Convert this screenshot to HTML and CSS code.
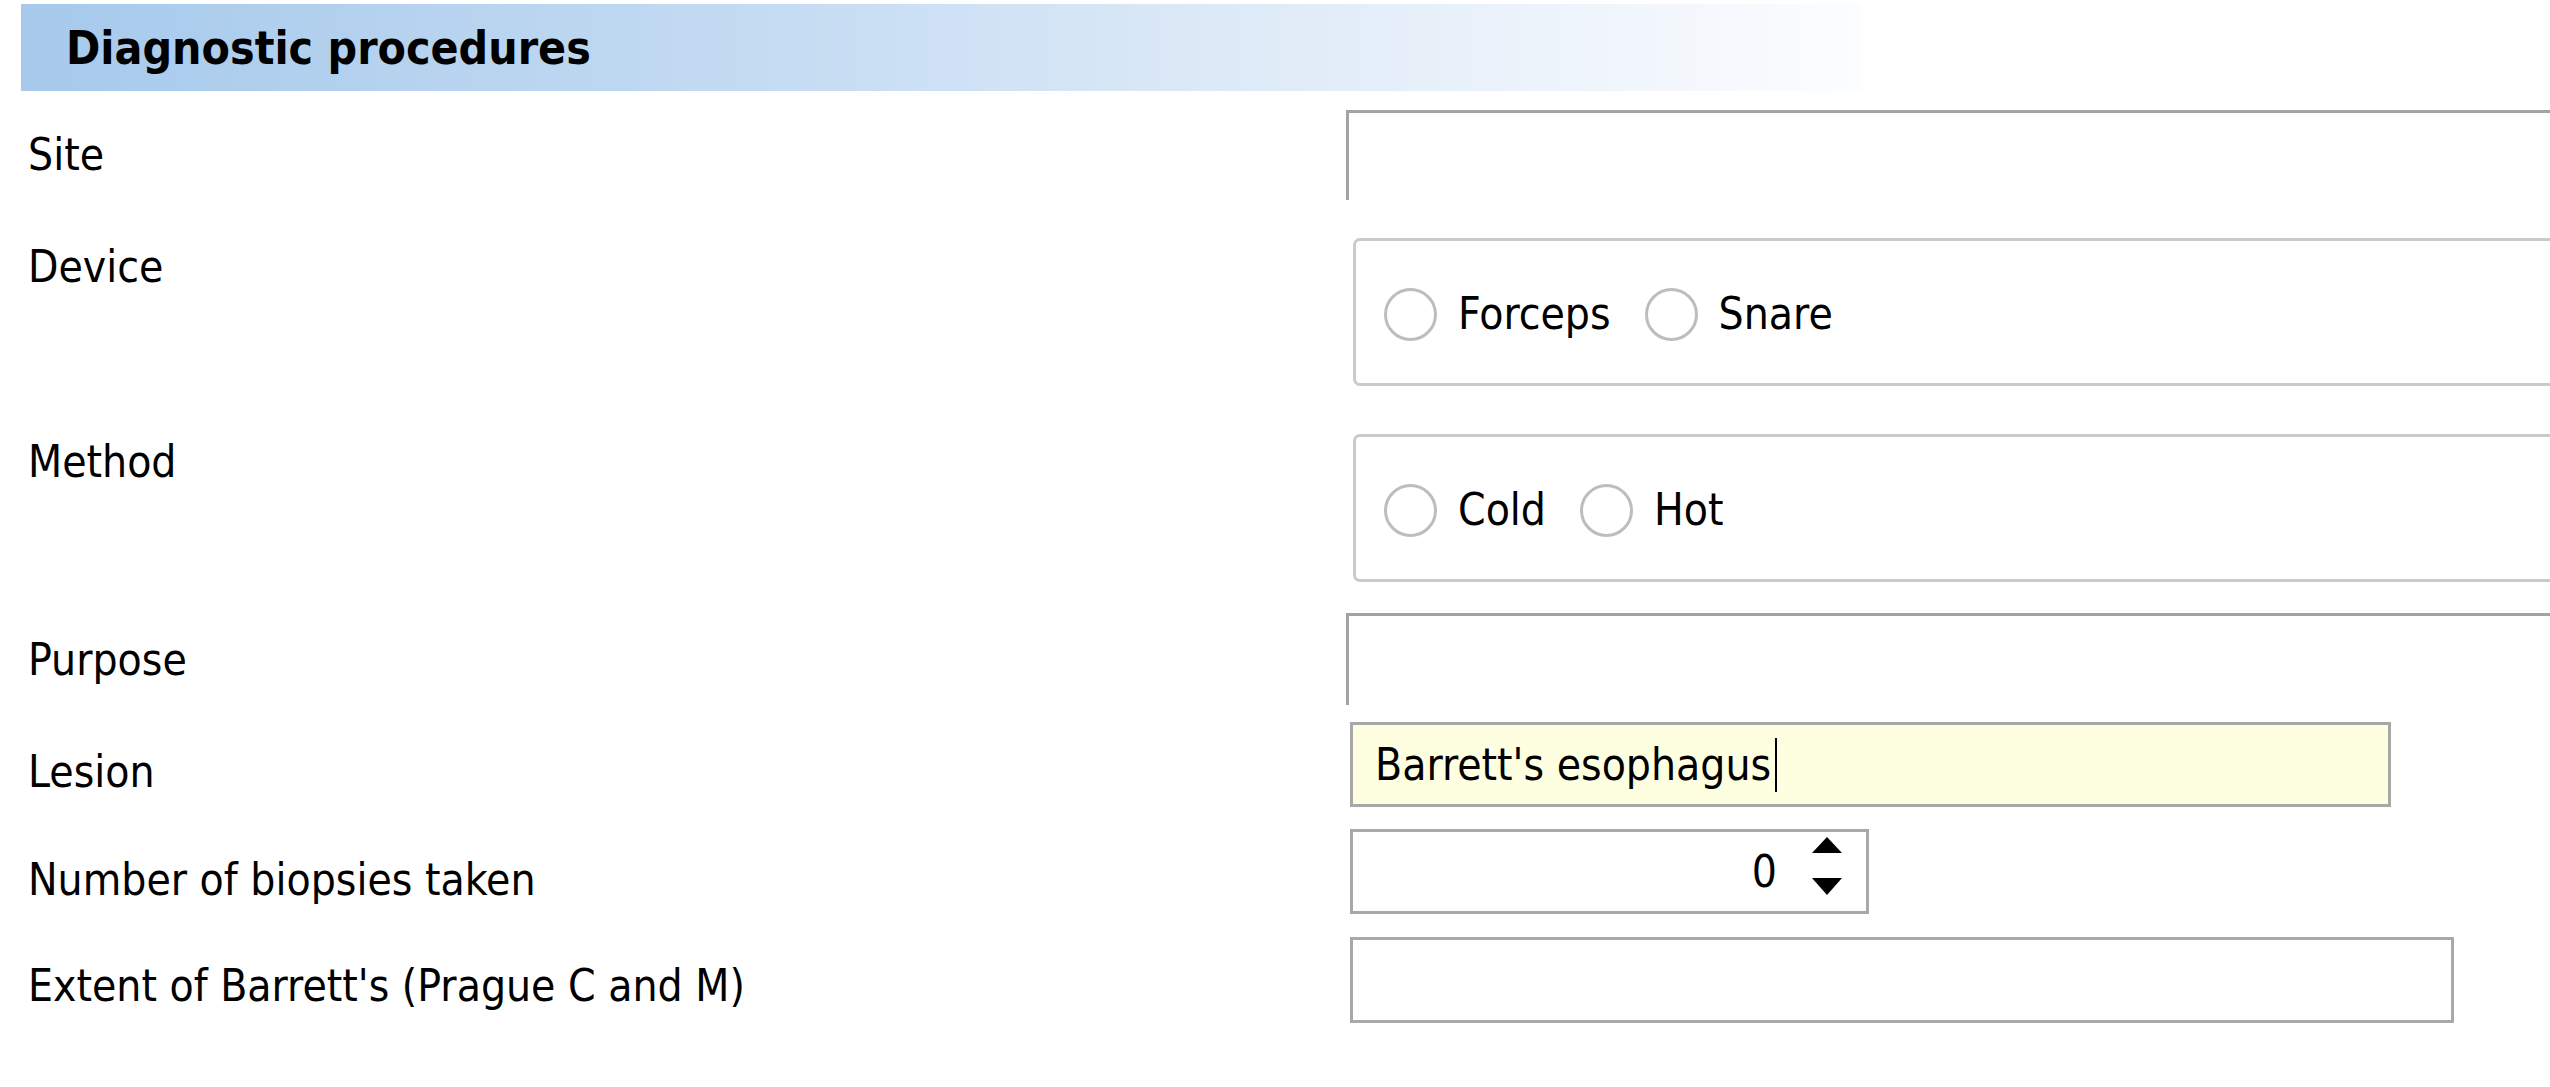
FILE: index.html
```html
<!DOCTYPE html>
<html>
<head>
<meta charset="utf-8">
<title>Diagnostic procedures</title>
<link rel="stylesheet" href="styles.css">
</head>
<body>
<div class="page">
  <div class="section-header"><span class="section-title">Diagnostic procedures</span></div>
  <div class="form">
    <div class="row row-site">
      <div class="label">Site</div>
      <div class="control"><div class="open-box open-box-site"></div></div>
    </div>
    <div class="row row-device">
      <div class="label">Device</div>
      <div class="control">
        <div class="group-box">
          <span class="radio"></span><span class="radio-label">Forceps</span>
          <span class="radio"></span><span class="radio-label">Snare</span>
        </div>
      </div>
    </div>
    <div class="row row-method">
      <div class="label">Method</div>
      <div class="control">
        <div class="group-box">
          <span class="radio"></span><span class="radio-label">Cold</span>
          <span class="radio"></span><span class="radio-label">Hot</span>
        </div>
      </div>
    </div>
    <div class="row row-purpose">
      <div class="label">Purpose</div>
      <div class="control"><div class="open-box open-box-purpose"></div></div>
    </div>
    <div class="row row-lesion">
      <div class="label">Lesion</div>
      <div class="control">
        <div class="textbox textbox-lesion"><span class="value">Barrett's esophagus</span><span class="caret"></span></div>
      </div>
    </div>
    <div class="row row-number">
      <div class="label">Number of biopsies taken</div>
      <div class="control">
        <div class="textbox spinner">
          <span class="value">0</span>
          <span class="spin-arrows"><span class="arrow-up"></span><span class="arrow-down"></span></span>
        </div>
      </div>
    </div>
    <div class="row row-extent">
      <div class="label">Extent of Barrett's (Prague C and M)</div>
      <div class="control"><div class="textbox textbox-extent"></div></div>
    </div>
  </div>
</div>
</body>
</html>
```

FILE: styles.css
```css
html, body {
  margin: 0;
  padding: 0;
  background: #ffffff;
  overflow: hidden;
}

body {
  font-family: "DejaVu Sans Condensed", "DejaVu Sans", "Liberation Sans", sans-serif;
  font-stretch: condensed;
  color: #000000;
  width: 2550px;
  height: 1087px;
}

.page {
  padding-top: 4px;
}

.section-header {
  margin-left: 21px;
  width: 1840px;
  height: 87px;
  box-sizing: border-box;
  padding-left: 45px;
  display: flex;
  align-items: center;
  background: linear-gradient(to right, #a6c9ec 0%, #c4dbf2 40%, #e6eff9 75%, #fcfdff 100%);
}

.section-title {
  font-weight: bold;
  font-size: 46px;
  line-height: 1;
}

.form {
  margin-top: 19px;
}

.row {
  display: flex;
  align-items: flex-start;
  padding-left: 28px;
}

.label {
  width: 1318px;
  flex: none;
  font-size: 44px;
  line-height: 52px;
  white-space: nowrap;
}

.control {
  flex: 1;
  min-width: 0;
}

.row-site { height: 128px; }
.row-site .label { margin-top: 19px; }
.row-device { height: 196px; }
.row-device .label { margin-top: 3px; }
.row-method { height: 179px; }
.row-method .label { margin-top: 2px; }
.row-purpose { height: 109px; }
.row-purpose .label { margin-top: 21px; }
.row-lesion { height: 107px; }
.row-lesion .label { margin-top: 24px; }
.row-number { height: 108px; }
.row-number .label { margin-top: 25px; }
.row-extent .label { margin-top: 23px; }

.open-box {
  border-top: 3px solid #a3a3a3;
  border-left: 3px solid #a3a3a3;
  box-sizing: border-box;
}
.open-box-site { height: 90px; }
.open-box-purpose { height: 92px; }

.group-box {
  margin-left: 7px;
  height: 148px;
  box-sizing: border-box;
  border: 3px solid #cacaca;
  border-right: none;
  border-radius: 7px 0 0 7px;
  display: flex;
  align-items: center;
  padding-left: 28px;
  padding-top: 4px;
}

.radio {
  width: 53px;
  height: 53px;
  box-sizing: border-box;
  border: 3px solid #bdbdbd;
  border-radius: 50%;
  flex: none;
}

.radio-label {
  font-size: 44px;
  line-height: 52px;
  margin-left: 21px;
  margin-right: 34px;
}

.textbox {
  margin-left: 4px;
  height: 85px;
  box-sizing: border-box;
  border: 3px solid #a8a8a8;
  background: #ffffff;
  display: flex;
  align-items: center;
  font-size: 44px;
  line-height: 52px;
}

.textbox-lesion {
  width: 1041px;
  background: #fefee1;
  padding-left: 22px;
}

.caret {
  width: 2px;
  height: 54px;
  background: #000000;
  margin-left: 4px;
}

.textbox-extent {
  width: 1104px;
  height: 86px;
}

.spinner {
  width: 519px;
  justify-content: flex-end;
  padding-right: 24px;
}

.spin-arrows {
  display: flex;
  flex-direction: column;
  align-items: center;
  align-self: flex-start;
  margin-top: 5px;
  margin-left: 35px;
  width: 30px;
}

.arrow-up {
  width: 0;
  height: 0;
  border-left: 15px solid transparent;
  border-right: 15px solid transparent;
  border-bottom: 16px solid #000000;
}

.arrow-down {
  width: 0;
  height: 0;
  margin-top: 25px;
  border-left: 15px solid transparent;
  border-right: 15px solid transparent;
  border-top: 17px solid #000000;
}
```
